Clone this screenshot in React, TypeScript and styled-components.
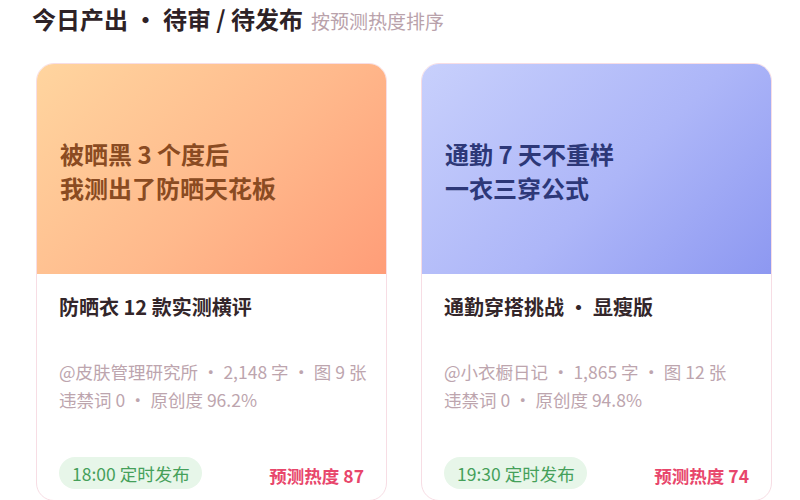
import React from "react";
import styled, { createGlobalStyle } from "styled-components";

const GlobalStyle = createGlobalStyle`
  html, body {
    margin: 0;
    padding: 0;
    background: #ffffff;
  }
  body {
    font-family: "Noto Sans CJK SC", "Noto Sans", sans-serif;
    overflow: hidden;
  }
`;

const Page = styled.div`
  width: 800px;
  height: 500px;
  overflow: hidden;
`;

const Header = styled.div`
  display: flex;
  align-items: baseline;
  gap: 8px;
  padding: 2px 0 0 32px;
  height: 60px;
  box-sizing: border-box;
`;

const Heading = styled.h1`
  margin: 0;
  font-size: 24px;
  line-height: 34px;
  font-weight: 700;
  color: #2e2226;
`;

const SubHeading = styled.span`
  font-size: 19px;
  color: #b9a2ab;
`;

const Grid = styled.div`
  display: grid;
  grid-template-columns: 351px 351px;
  gap: 34px;
  padding: 3px 0 0 36px;
`;

const Card = styled.div`
  height: 436px;
  border: 1px solid #f7dde4;
  border-radius: 18px;
  overflow: hidden;
  display: flex;
  flex-direction: column;
  background: #fff;
`;

const Cover = styled.div<{ $tone: "warm" | "cool" }>`
  height: 210px;
  flex: none;
  display: flex;
  flex-direction: column;
  justify-content: center;
  padding: 4px 0 0 23px;
  box-sizing: border-box;
  background: ${(p) =>
    p.$tone === "warm"
      ? "linear-gradient(135deg, #ffd59f 0%, #ffb98c 55%, #ff9d78 100%)"
      : "linear-gradient(135deg, #c8d0fc 0%, #adb6f8 55%, #8d98f1 100%)"};
`;

const CoverLine = styled.div<{ $tone: "warm" | "cool" }>`
  font-size: 24px;
  line-height: 34px;
  font-weight: 700;
  color: ${(p) => (p.$tone === "warm" ? "#8a4b22" : "#2d3878")};
`;

const Body = styled.div`
  flex: 1;
  display: flex;
  flex-direction: column;
  padding: 19px 22px 11px 22px;
`;

const Title = styled.div`
  font-size: 20px;
  line-height: 28px;
  font-weight: 700;
  color: #33262a;
`;

const Meta = styled.div`
  margin-top: 37px;
  font-size: 17.5px;
  line-height: 28px;
  color: #bda5ae;
  white-space: nowrap;
`;

const Footer = styled.div`
  margin-top: auto;
  display: flex;
  align-items: center;
  justify-content: space-between;
`;

const Schedule = styled.span`
  display: inline-flex;
  align-items: center;
  height: 32px;
  padding: 0 12px 0 13px;
  border-radius: 16px;
  background: #e7f6e9;
  color: #45a05a;
  font-size: 17.5px;
`;

const Heat = styled.span`
  margin-top: 4px;
  font-size: 17.5px;
  font-weight: 700;
  color: #e8466b;
`;

type Item = {
  tone: "warm" | "cool";
  cover: string[];
  title: string;
  meta: string[];
  time: string;
  heat: number;
};

const items: Item[] = [
  {
    tone: "warm",
    cover: ["被晒黑 3 个度后", "我测出了防晒天花板"],
    title: "防晒衣 12 款实测横评",
    meta: ["@皮肤管理研究所 · 2,148 字 · 图 9 张", "违禁词 0 · 原创度 96.2%"],
    time: "18:00",
    heat: 87,
  },
  {
    tone: "cool",
    cover: ["通勤 7 天不重样", "一衣三穿公式"],
    title: "通勤穿搭挑战 · 显瘦版",
    meta: ["@小衣橱日记 · 1,865 字 · 图 12 张", "违禁词 0 · 原创度 94.8%"],
    time: "19:30",
    heat: 74,
  },
];

export default function App() {
  return (
    <Page>
      <GlobalStyle />
      <Header>
        <Heading>今日产出 · 待审 / 待发布</Heading>
        <SubHeading>按预测热度排序</SubHeading>
      </Header>
      <Grid>
        {items.map((it) => (
          <Card key={it.title}>
            <Cover $tone={it.tone}>
              {it.cover.map((line) => (
                <CoverLine key={line} $tone={it.tone}>
                  {line}
                </CoverLine>
              ))}
            </Cover>
            <Body>
              <Title>{it.title}</Title>
              <Meta>
                {it.meta.map((m) => (
                  <div key={m}>{m}</div>
                ))}
              </Meta>
              <Footer>
                <Schedule>{it.time} 定时发布</Schedule>
                <Heat>预测热度 {it.heat}</Heat>
              </Footer>
            </Body>
          </Card>
        ))}
      </Grid>
    </Page>
  );
}
